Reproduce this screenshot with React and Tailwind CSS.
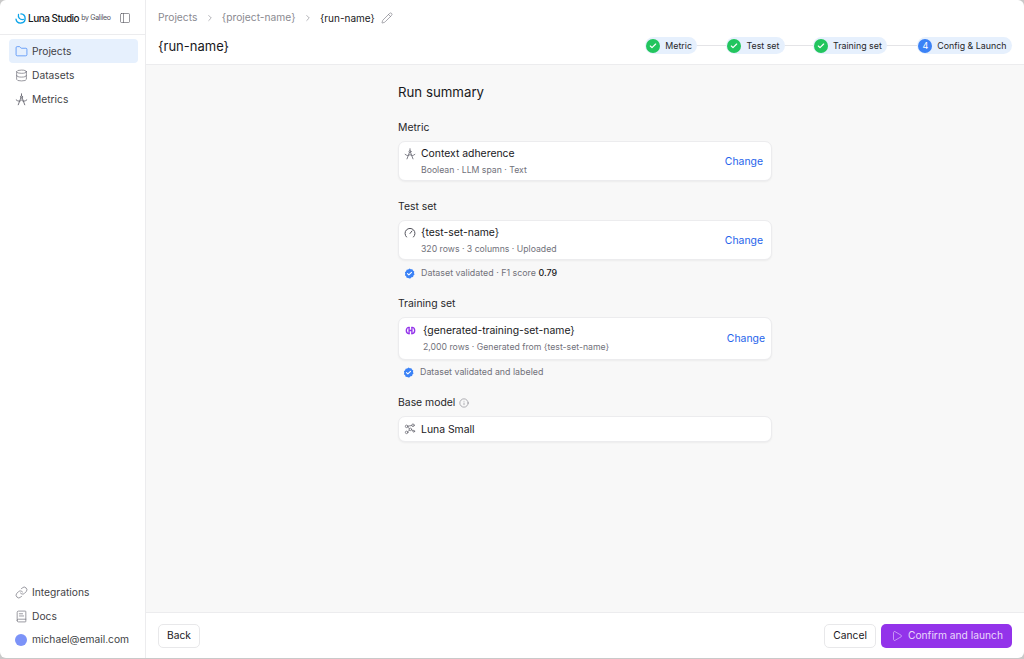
import {
  Check,
  ChevronRight,
  Database,
  BookText,
  Folder,
  Info,
  Link,
  PanelLeft,
  Pencil,
  Play,
} from "lucide-react";

const MetricIcon = ({ className }) => (
  <svg viewBox="0 0 16 16" fill="none" stroke="currentColor" strokeWidth="1.2" strokeLinecap="round" strokeLinejoin="round" className={className}>
    <path d="M8 1v2.500M7.200 6 4 14.500M8.800 6 12 14.500" />
    <path d="M1.500 8.500c2.500 2 4.500 2.200 6.500.2 2 2 4 1.800 6.500-.2" />
    <circle cx="8" cy="4.800" r="1.300" />
  </svg>
);

const GaugeIcon = ({ className }) => (
  <svg viewBox="0 0 12 12" fill="none" stroke="currentColor" strokeWidth="1" strokeLinecap="round" className={className}>
    <path d="M2.500 10a5 5 0 1 1 7 0" />
    <path d="M6 6.500 8 4" />
  </svg>
);

const ModelIcon = ({ className }) => (
  <svg viewBox="0 0 16 16" fill="none" stroke="currentColor" strokeWidth="1.1" strokeLinecap="round" className={className}>
    <circle cx="3.500" cy="4.500" r="1.700" />
    <circle cx="12" cy="3" r="1.700" />
    <circle cx="8.500" cy="8.500" r="1.700" />
    <circle cx="3.500" cy="12.500" r="1.700" />
    <circle cx="13" cy="11" r="1.200" />
    <path d="M5.200 4.200 10.300 3.300M7.200 9.700 4.900 11.500M10.100 9.100l1.900 1.200M5 5.500l2 1.800" />
  </svg>
);

const DumbbellIcon = ({ className }) => (
  <svg viewBox="0 0 14 14" fill="none" stroke="currentColor" strokeWidth="1.700" strokeLinecap="round" className={className}>
    <path d="M5.200 3v8M8.800 3v8M5.200 7h3.600" />
    <path d="M5.200 3C.500 3 .500 11 5.200 11M8.800 3c4.700 0 4.700 8 0 8" />
  </svg>
);

const VerifiedIcon = ({ className }) => (
  <svg viewBox="0 0 12 12" className={className}>
    <path fill="#3b82f6" d="M6 .5 7.400 1.400l1.700-.1.700 1.500 1.400.9-.3 1.700.6 1.600-1.200 1.200-.4 1.700-1.700.3L6.900 11.400 6 11.500l-1.400-.7-1.700-.2-.6-1.600-1.300-1.100.4-1.700-.4-1.600 1.300-1.100.6-1.600 1.700-.2z" />
    <path d="M3.800 6.100 5.300 7.500 8.200 4.700" fill="none" stroke="#fff" strokeWidth="1.200" strokeLinecap="round" strokeLinejoin="round" />
  </svg>
);

const Logo = () => (
  <svg viewBox="0 0 12 12" fill="none" className="w-[11px] h-[11px]">
    <path d="M6.500 1a5 5 0 1 1-5.400 5.800" stroke="#0ea5e9" strokeWidth="1.500" strokeLinecap="round" />
    <path d="M3.800 1.600c-.8 3.200 1.600 6.200 5.400 5.400" stroke="#0ea5e9" strokeWidth="1.400" strokeLinecap="round" />
  </svg>
);

const NavItem = ({ icon: Icon, label, active, height = "h-6" }) => (
  <div
    className={`${height} flex items-center gap-[4px] px-[6px] pt-[1px] rounded-[4px] text-[10.250px] text-[#3f3f46] ${
      active ? "bg-[#e6f0fd]" : ""
    }`}
  >
    <Icon strokeWidth={1.3} className={`w-[13px] h-[13px] shrink-0 ${active ? "text-[#3b82f6]" : "text-[#71717a]"}`} />
    {label}
  </div>
);

const Step = ({ label, number, done = true }) => (
  <div className="h-[17px] flex items-center gap-[5px] pl-[1px] pr-[5.500px] rounded-full bg-[#e6f0fd] text-[8.850px] text-[#27272a] whitespace-nowrap">
    {done ? (
      <span className="w-[14px] h-[14px] rounded-full bg-[#22c55e] flex items-center justify-center">
        <Check strokeWidth={3.5} className="w-[8px] h-[8px] text-white" />
      </span>
    ) : (
      <span className="w-[14px] h-[14px] rounded-full bg-[#3b82f6] flex items-center justify-center text-white text-[9px]">
        {number}
      </span>
    )}
    {label}
  </div>
);

const StepLine = ({ width }) => <div className={`h-px bg-[#e4e4e7] ${width}`} />;

const Card = ({ icon, title, sub, height = "h-[40px]", pr = "pr-[8px]" }) => (
  <div className={`${height} bg-white rounded-[7px] border border-[#ececee] shadow-[0_1px_2px_rgba(0,0,0,0.05)] flex items-center justify-between pl-[5px] ${pr}`}>
    <div className={`flex ${sub ? "items-start" : "items-center"} gap-[5px]`}>
      {icon}
      <div className="flex flex-col gap-[5px]">
        <div className="text-[10.400px] leading-[13px] text-[#18181b]">{title}</div>
        {sub && <div className="text-[8.700px] leading-[11px] text-[#71717a]">{sub}</div>}
      </div>
    </div>
    {sub && <span className="mt-[1px] text-[10.400px] text-[#2563eb]">Change</span>}
  </div>
);

export default function App() {
  return (
    <div className="w-[1024px] h-[659px] bg-[#c9c9c9] overflow-hidden font-['Inter',sans-serif]">
      <div className="h-[658px] flex bg-white rounded-[6px] overflow-hidden">
        <aside className="w-[146px] shrink-0 border-r border-[#ececee] flex flex-col">
          <div className="h-[35px] shrink-0 border-b border-[#ececee] flex items-center justify-between pt-[2px] pl-[15px] pr-[14px]">
            <div className="flex items-center gap-[2px]">
              <Logo />
              <span className="text-[10px] font-medium tracking-[-0.5px] text-[#18181b] whitespace-nowrap">Luna Studio</span>
              <span className="text-[7px] tracking-[-0.3px] text-[#52525b] whitespace-nowrap mt-[1px]">by Galileo</span>
            </div>
            <PanelLeft strokeWidth={1.2} className="w-[12px] h-[12px] text-[#52525b]" />
          </div>
          <nav className="flex flex-col pl-[9px] pr-[7px] pt-[4px]">
            <NavItem icon={Folder} label="Projects" active />
            <NavItem icon={Database} label="Datasets" />
            <NavItem icon={MetricIcon} label="Metrics" />
          </nav>
          <div className="mt-auto flex flex-col pl-[9px] pr-[7px] pb-[7px]">
            <NavItem icon={Link} label="Integrations" />
            <NavItem icon={BookText} label="Docs" />
            <div className="h-[23px] flex items-center gap-[5px] px-[6px] text-[10.250px] text-[#3f3f46]">
              <span className="w-[12px] h-[12px] shrink-0 rounded-full bg-[#7c93f8]" />
              michael@email.com
            </div>
          </div>
        </aside>

        <main className="flex-1 flex flex-col min-w-0">
          <header className="h-[65px] shrink-0 border-b border-[#ececee] px-[12px]">
            <div className="h-[36px] flex items-center text-[10.250px] text-[#8a8a90]">
              <span>Projects</span>
              <ChevronRight strokeWidth={1.3} className="w-[10px] h-[10px] mx-[7.250px] text-[#71717a]" />
              <span>{"{project-name}"}</span>
              <ChevronRight strokeWidth={1.3} className="w-[10px] h-[10px] mx-[7.250px] text-[#71717a]" />
              <span className="text-[10px] text-[#18181b]">{"{run-name}"}</span>
              <Pencil strokeWidth={1.2} className="w-[12px] h-[12px] ml-[6px] text-[#71717a]" />
            </div>
            <div className="flex items-center justify-between">
              <div className="text-[13px] leading-[20px] text-[#18181b]">{"{run-name}"}</div>
              <div className="flex items-center mb-[1px]">
                <Step label="Metric" />
                <StepLine width="w-[29px]" />
                <Step label="Test set" />
                <StepLine width="w-[28px]" />
                <Step label="Training set" />
                <StepLine width="w-[30px]" />
                <Step label="Config & Launch" number="4" done={false} />
              </div>
            </div>
          </header>

          <div className="flex-1 bg-[#f8f8f8] flex justify-center min-h-0">
            <div className="w-[374px] pt-[19px]">
              <h1 className="text-[13.250px] leading-[17px] text-[#18181b] mb-[20px]">Run summary</h1>

              <div className="text-[10.400px] leading-[14px] text-[#27272a] mb-[6px]">Metric</div>
              <Card
                icon={<MetricIcon className="w-[12px] h-[12px] mt-[1px] text-[#71717a]" />}
                title="Context adherence"
                sub="Boolean · LLM span · Text"
              />

              <div className="text-[10.400px] leading-[14px] text-[#27272a] mt-[19px] mb-[6px]">Test set</div>
              <Card
                icon={<GaugeIcon className="w-[12px] h-[12px] mt-[1px] text-[#52525b]" />}
                title="{test-set-name}"
                sub="320 rows · 3 columns · Uploaded"
              />
              <div className="flex items-center gap-[6px] pl-[6px] mt-[7px] h-[12px] text-[8.900px] text-[#71717a]">
                <VerifiedIcon className="w-[11px] h-[11px]" />
                <span>
                  Dataset validated · F1 score <span className="font-medium text-[#18181b]">0.79</span>
                </span>
              </div>

              <div className="text-[10.400px] leading-[14px] text-[#27272a] mt-[18px] mb-[6px]">Training set</div>
              <Card
                height="h-[43px]"
                pr="pr-[6px]"
                icon={<DumbbellIcon className="w-[11px] h-[11px] ml-[1px] mr-[2px] mt-[1px] text-[#9333ea]" />}
                title="{generated-training-set-name}"
                sub="2,000 rows · Generated from {test-set-name}"
              />
              <div className="flex items-center gap-[6px] pl-[5px] mt-[6px] h-[12px] text-[8.850px] text-[#71717a]">
                <VerifiedIcon className="w-[11px] h-[11px]" />
                <span>Dataset validated and labeled</span>
              </div>

              <div className="flex items-center gap-[4px] mt-[18px] mb-[6px] text-[10.400px] leading-[14px] text-[#27272a]">
                Base model
                <Info strokeWidth={1.3} className="w-[10px] h-[10px] text-[#71717a]" />
              </div>
              <Card
                height="h-[26px]"
                icon={<ModelIcon className="w-[12px] h-[12px] text-[#71717a]" />}
                title="Luna Small"
              />
            </div>
          </div>

          <footer className="h-[46px] shrink-0 border-t border-[#ececee] flex items-center justify-between px-[12px]">
            <button className="h-[24px] px-[8px] rounded-[5px] border border-[#e8e8ea] bg-white text-[10.250px] text-[#18181b]">
              Back
            </button>
            <div className="flex items-center gap-[5px]">
              <button className="h-[24px] px-[8px] rounded-[5px] border border-[#e8e8ea] bg-white text-[10.250px] text-[#18181b]">
                Cancel
              </button>
              <button className="h-[24px] pl-[10px] pr-[9px] rounded-[5px] bg-[#9333ea] text-[10.250px] text-[#ead9fb] flex items-center gap-[5px]">
                <Play strokeWidth={1.2} className="w-[12px] h-[12px]" />
                Confirm and launch
              </button>
            </div>
          </footer>
        </main>
      </div>
    </div>
  );
}
